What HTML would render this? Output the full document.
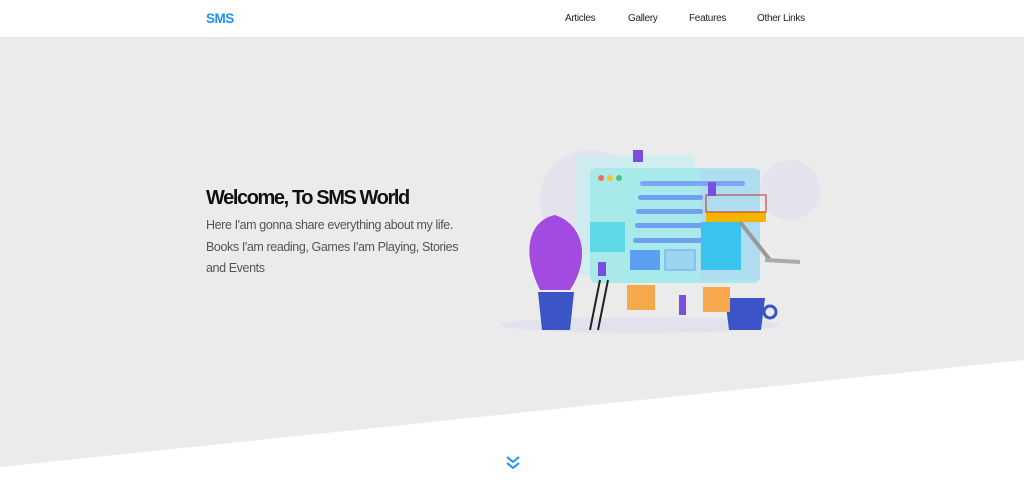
<!DOCTYPE html>
<html><head><meta charset="utf-8"><style>
*{margin:0;padding:0;box-sizing:border-box}
body{width:1024px;height:489px;overflow:hidden;background:#fff;font-family:"Liberation Sans",sans-serif;position:relative}
.nav{position:absolute;left:0;top:0;width:1024px;height:38px;background:#fff;border-bottom:1px solid #e4e4e4}
.logo{position:absolute;left:206px;top:11px;color:#1e90ff;font-weight:bold;font-size:13.5px;letter-spacing:-0.5px}
.nav a{position:absolute;top:13px;font-size:10px;color:#222;text-decoration:none;letter-spacing:-0.3px}
h1{position:absolute;left:206px;top:187px;font-size:20px;font-weight:bold;color:#111;letter-spacing:-1.4px}
p{position:absolute;left:206px;top:215px;font-size:12.5px;line-height:21.5px;color:#555;width:260px;letter-spacing:-0.4px}
</style></head><body>
<svg style="position:absolute;left:0;top:0" width="1024" height="489">
<polygon points="0,38 1024,38 1024,360 0,467" fill="#ebebeb"/>
<g>
<ellipse cx="590" cy="200" rx="50" ry="50" fill="#e4e2ec"/>
<ellipse cx="790" cy="190" rx="30" ry="30" fill="#e4e2ec"/>
<ellipse cx="640" cy="325" rx="140" ry="8" fill="#e2e2ee"/>
<rect x="575" y="155" width="120" height="120" rx="6" fill="#c9eef0" opacity=".8"/>
<rect x="590" y="168" width="170" height="115" rx="6" fill="#a8eaea"/>
<rect x="700" y="170" width="60" height="110" fill="#b0dcef"/>
<circle cx="601" cy="178" r="3" fill="#f06f5a"/><circle cx="610" cy="178" r="3" fill="#f4c531"/><circle cx="619" cy="178" r="3" fill="#4cc47a"/>
<rect x="640" y="181" width="105" height="5" rx="2.5" fill="#7aa6f4"/>
<rect x="638" y="195" width="65" height="5" rx="2.5" fill="#6fa0f2"/>
<rect x="636" y="209" width="67" height="5" rx="2.5" fill="#6fa0f2"/>
<rect x="635" y="223" width="68" height="5" rx="2.5" fill="#6fa0f2"/>
<rect x="633" y="238" width="70" height="5" rx="2.5" fill="#6fa0f2"/>
<rect x="590" y="222" width="35" height="30" fill="#5fd9e6"/>
<rect x="630" y="250" width="30" height="20" fill="#5a9ff0"/>
<rect x="665" y="250" width="30" height="20" fill="#9ad4f0" stroke="#6fa0f2"/>
<rect x="701" y="222" width="40" height="48" fill="#39c3ee"/>
<rect x="706" y="212" width="60" height="10" fill="#f4b400"/>
<rect x="706" y="195" width="60" height="17" fill="none" stroke="#c0302f"/>
<line x1="740" y1="222" x2="770" y2="260" stroke="#999" stroke-width="4"/>
<line x1="765" y1="260" x2="800" y2="262" stroke="#aaa" stroke-width="4"/>
<path d="M540 290 C520 250 530 220 555 215 C585 225 590 260 570 290Z" fill="#a24be0"/>
<path d="M538 292 h36 l-4 38 h-28z" fill="#3b55c8"/>
<path d="M725 298 h40 l-4 32 h-32z" fill="#3b55c8"/>
<circle cx="770" cy="312" r="6" fill="none" stroke="#3b55c8" stroke-width="3"/>
<rect x="627" y="285" width="28" height="25" fill="#f8a84c"/>
<rect x="703" y="287" width="27" height="25" fill="#f8a84c"/>
<line x1="600" y1="280" x2="590" y2="330" stroke="#222" stroke-width="2"/><line x1="608" y1="280" x2="598" y2="330" stroke="#222" stroke-width="2"/>
<rect x="598" y="262" width="8" height="14" fill="#7a4fe0"/>
<rect x="633" y="150" width="10" height="12" fill="#7a4fe0"/>
<rect x="708" y="182" width="8" height="14" fill="#7a4fe0"/>
<rect x="679" y="295" width="7" height="20" fill="#7a4fe0"/>
</g>
<path d="M507 457 l6 5 l6-5 M507 463 l6 5 l6-5" fill="none" stroke="#1e90ff" stroke-width="2"/>
</svg>
<div class="nav"><span class="logo">SMS</span>
<a style="left:565px">Articles</a><a style="left:628px">Gallery</a><a style="left:689px">Features</a><a style="left:757px">Other Links</a></div>
<h1>Welcome, To SMS World</h1>
<p>Here I'am gonna share everything about my life. Books I'am reading, Games I'am Playing, Stories and Events</p>
</body></html>
